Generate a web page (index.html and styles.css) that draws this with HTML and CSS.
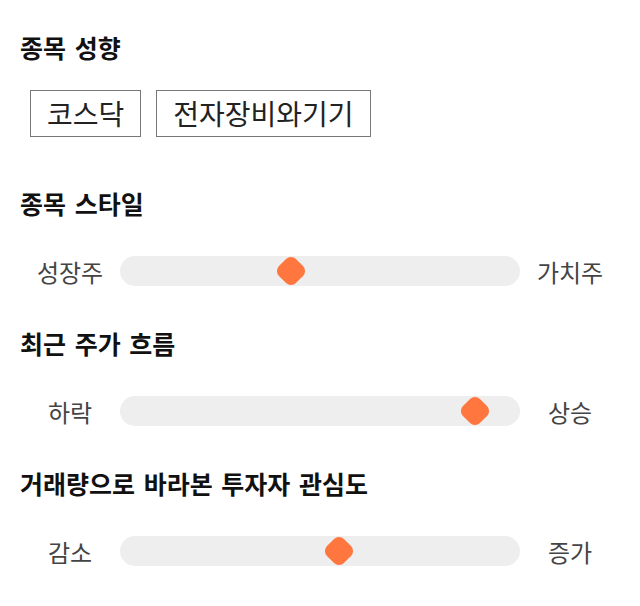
FILE: index.html
```html
<!DOCTYPE html>
<html>
    <head>
        <meta charset="utf-8">
        <title>종목 성향</title>
        <link rel="stylesheet" href="styles.css">
    </head>
  <body>
    <div class="wrap">
        <section class="sec">
            <h2 class="title">종목 성향</h2>
            <div class="tags">
                <span class="tag">코스닥</span>
                <span class="tag">전자장비와기기</span>
            </div>
        </section>
        <section class="sec">
            <h2 class="title">종목 스타일</h2>
            <div class="range">
                <span class="label">성장주</span>
                <div class="track"><span class="thumb" style="left: 42.75%"></span></div>
                <span class="label">가치주</span>
            </div>
        </section>
        <section class="sec">
            <h2 class="title">최근 주가 흐름</h2>
            <div class="range">
                <span class="label">하락</span>
                <div class="track"><span class="thumb" style="left: 88.75%"></span></div>
                <span class="label">상승</span>
            </div>
        </section>
        <section class="sec">
            <h2 class="title">거래량으로 바라본 투자자 관심도</h2>
            <div class="range">
                <span class="label">감소</span>
                <div class="track"><span class="thumb" style="left: 54.75%"></span></div>
                <span class="label">증가</span>
            </div>
        </section>
    </div>
  </body>
</html>
```

FILE: styles.css
```css
* {
    margin: 0;
    padding: 0;
    box-sizing: border-box;
}
body {
    background: #fff;
    font-family: "Noto Sans CJK KR", "Noto Sans", sans-serif;
    color: #111;
}
.wrap {
    display: flex;
    flex-direction: column;
    gap: 42px;
    padding: 32px 20px 0;
}
.title {
    height: 30px;
    line-height: 30px;
    font-size: 25px;
    font-weight: bold;
    word-spacing: 3px;
    color: #111;
}
.tags {
    display: flex;
    gap: 15px;
    margin-top: 28px;
    padding: 0 10px 9px;
}
.tag {
    height: 47px;
    line-height: 45px;
    padding: 0 16px;
    border: 1px solid #777;
    font-size: 28px;
    color: #222;
}
.range {
    display: flex;
    align-items: center;
    margin-top: 38px;
    height: 30px;
}
.label {
    width: 100px;
    text-align: center;
    font-size: 24px;
    color: #444;
}
.track {
    position: relative;
    flex: 1;
    height: 30px;
    border-radius: 15px;
    background: #eeeeee;
}
.thumb {
    position: absolute;
    top: 50%;
    width: 24px;
    height: 24px;
    border-radius: 7px;
    background: #ff763f;
    transform: translate(-50%, -50%) rotate(45deg);
}
```
